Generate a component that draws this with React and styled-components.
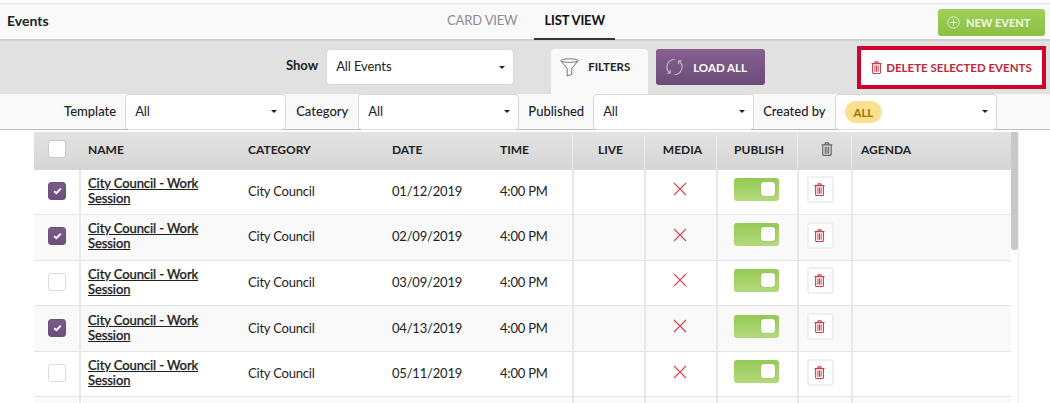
import React from "react";
import styled, { createGlobalStyle } from "styled-components";

const Global = createGlobalStyle`
  html, body { margin: 0; padding: 0; background: #fff; overflow: hidden; }
  body { font-family: Lato, "Open Sans", sans-serif; color: #222; }
  * { box-sizing: border-box; }
`;
const Page = styled.div`width: 1050px; height: 403px; overflow: hidden; padding-top: 3px; background: #fff;`;
const Nav = styled.div`
  height: 38px; display: flex; align-items: stretch; background: #f9f9f9;
  border-top: 1px solid #e4e4e4; border-bottom: 2px solid #cfcfcf; padding: 0 5px 0 7px;
`;
const Title = styled.div`width: 440px; font-size: 14px; font-weight: 700; line-height: 33px; color: #222;`;
const Tab = styled.div`
  height: 36px; line-height: 33px; font-size: 13px; letter-spacing: -.15px; padding: 0 ${p => p.$active ? "10px" : "0"};
  color: ${p => p.$active ? "#111" : "#8c8c8c"}; font-weight: ${p => p.$active ? 700 : 400};
  border-bottom: ${p => p.$active ? "2px solid #333" : "none"};
  margin-right: ${p => p.$active ? "0" : "17px"};
`;
const NewEvent = styled.button`
  margin: 5px 0 0 auto; width: 107px; height: 27px; border: 0; border-radius: 3px;
  background: linear-gradient(#9fd05a, #8cbf45); color: #f2f8e6; font: 700 11px Lato, sans-serif;
  display: flex; align-items: center; justify-content: flex-start; gap: 6px; padding: 0 0 0 9px;
`;
const ShowBar = styled.div`
  height: 53px; background: #e1e1e1; display: flex; align-items: flex-start; padding: 8px 0 0 286px;
`;
const BarLabel = styled.label`font-size: 13px; font-weight: 700; line-height: 33px; margin-right: 8px; color: #222;`;
const Select = styled.div`
  width: ${p => p.$w}px; height: 36px; background: #fff; border: 1px solid #d8d8d8; border-radius: 4px;
  display: flex; align-items: center; justify-content: space-between; padding: 0 8px 2px 9px;
  font-size: 13px; letter-spacing: -.1px; color: #222; flex: none;
  &::after { content: ""; border: 3px solid transparent; border-top: 3.5px solid #222; border-bottom: 0; margin-top: 2px; }
`;
const FilterTab = styled.div`
  margin-left: 37px; width: 97px; height: 45px; background: #f9f9f9; border-radius: 4px 4px 0 0;
  display: flex; align-items: flex-start; padding: 8px 0 0 9px; gap: 9px; font-size: 11.5px; font-weight: 700; color: #222;
  line-height: 20px;
`;
const LoadAll = styled.button`
  margin-left: 8px; width: 109px; height: 36px; border: 0; border-radius: 3px;
  background: linear-gradient(#87608f, #6a4c78); color: #fff; font: 700 11.5px Lato, sans-serif;
  display: flex; align-items: center; padding: 0 0 0 10px; gap: 10px;
`;
const DeleteBtn = styled.button`
  margin: -3px 0 0 92px; width: 189px; height: 43px; border: 4px solid #d0042a; background: #fff;
  color: #b92a42; font: 700 11.5px Lato, sans-serif; display: flex; align-items: center; gap: 4px; padding: 0 0 0 10px;
`;
const FilterRow = styled.div`
  height: 36px; background: #f9f9f9; display: flex; align-items: center; padding-left: 64px;
  border-bottom: 1px solid #bdbdbd;
`;
const FilterLabel = styled.label`
  font-size: 13px; color: #222; flex: none; font-weight: 500;
  margin: 0 ${p => p.$mr ?? 9}px 2px ${p => p.$ml || 0}px;
`;
const Pill = styled.span`
  background: #fbe08f; color: #9c7406; font-size: 11.5px; font-weight: 700; border-radius: 11px;
  height: 22px; line-height: 23px; padding: 0 9px; margin-top: 2px;
`;
const TableArea = styled.div`display: flex; margin: 2px 0 0 34px; width: 985px;`;
const Table = styled.div`width: 977px; flex: none;`;
const cols = "45px 169px 144px 108px 72px 72px 72px 81px 54px 160px";
const Head = styled.div`
  display: grid; grid-template-columns: ${cols}; height: 37.5px;
  background: linear-gradient(#e3e3e3, #d5d5d5); font-size: 12px; font-weight: 700; color: #222;
`;
const HeadCell = styled.div`
  display: flex; align-items: center; justify-content: ${p => p.$center ? "center" : "flex-start"};
  padding-left: ${p => p.$pad ?? 8}px; padding-bottom: 3px;
  box-shadow: ${p => p.$line ? "inset 1px 0 0 #ececec" : "none"};
`;
const Row = styled.div`
  display: grid; grid-template-columns: ${cols}; height: 45.6px; border-bottom: 1.5px solid #e5e5e5;
  background: ${p => p.$alt ? "#f9f9f9" : "#fff"}; font-size: 13px; letter-spacing: -.2px; color: #222;
`;
const Cell = styled.div`
  display: flex; align-items: center; justify-content: ${p => p.$center ? "center" : "flex-start"};
  padding-left: ${p => p.$pad ?? 8}px; padding-bottom: 2px; box-shadow: ${p => p.$line ? "inset 2px 0 0 #e8e8e8" : "none"};
  min-width: 0;
`;
const EventLink = styled.a`
  display: block; max-width: 125px;
  font-size: 13px; line-height: 15px; color: #222; text-decoration: underline;
  letter-spacing: -.1px; font-weight: 500; -webkit-text-stroke: .25px #222;
`;
const Check = styled.span`
  width: 18px; height: 18px; border-radius: 3px; display: flex; align-items: center; justify-content: center; flex: none;
  background: ${p => p.$on ? "linear-gradient(#7c5a88, #6d4f7b)" : "#fff"};
  border: 1px solid ${p => p.$on ? "#6d4f7b" : "#dcdcdc"};
`;
const HeadCheck = styled(Check)`border: 1px solid #c8c8c8;`;
const Switch = styled.div`
  width: 45px; height: 23px; border-radius: 3px; background: linear-gradient(#95c955, #b4da7b); position: relative; margin-top: -3px;
  &::after { content: ""; position: absolute; right: 4px; top: 4px; width: 14px; height: 14px; background: #fff; border-radius: 3px; box-shadow: 0 0 1px #5e8a2a; }
`;
const TrashBtn = styled.button`
  width: 27px; height: 27px; background: #fff; border: 2px solid #f0f0f0; border-radius: 3px; padding: 0 2px 0 0;
  display: flex; align-items: center; justify-content: center; margin-top: -2px;
`;
const ScrollTrack = styled.div`width: 8px; height: 271px; border-right: 1px solid #f0f0f0;`;
const Thumb = styled.div`width: 7px; height: 118px; background: #c8c8c8; border-radius: 0 0 3px 3px;`;

const Trash = ({ c = "#c4414f", s = 13 }) => (
  <svg width={s * 0.85} height={s} viewBox="0 0 11 13" fill="none" style={{ flex: "none" }}>
    <path d="M.5 2.6h10M3.6 2.4 4.2.8h2.6l.6 1.6" stroke={c} strokeWidth="1.2" />
    <path d="M1.6 3v8.4c0 .7.4 1.1 1 1.1h5.8c.6 0 1-.4 1-1.1V3" stroke={c} strokeWidth="1.1" />
    <path d="M3.9 4.4v6.4M5.5 4.4v6.4M7.1 4.4v6.4" stroke={c} strokeWidth="1" />
  </svg>
);
const Tick = () => (
  <svg width="9" height="8" viewBox="0 0 9 8" fill="none"><path d="M1.2 4.2 3.4 6.2 7.8 1.6" stroke="#fff" strokeWidth="2" /></svg>
);
const Cross = () => (
  <svg width="14" height="14" viewBox="0 0 14 14" fill="none" style={{ marginTop: -3 }}><path d="M1 1l12 12M13 1 1 13" stroke="#d9434f" strokeWidth="1.1" /></svg>
);
const Plus = () => (
  <svg width="13" height="13" viewBox="0 0 13 13" fill="none"><circle cx="6.5" cy="6.5" r="5.7" stroke="#dcecc0" /><path d="M6.5 3v7M3 6.5h7" stroke="#dcecc0" /></svg>
);
const Funnel = () => (
  <svg width="19" height="19" viewBox="0 0 19 19" fill="none" style={{ flex: "none", marginTop: 1 }}>
    <ellipse cx="9.5" cy="2.6" rx="8.6" ry="1.8" stroke="#666" strokeWidth=".9" />
    <path d="M1 3l6.2 7.4V18l4.6-1.6v-6L18 3" stroke="#666" strokeWidth=".9" />
  </svg>
);
const Reload = () => (
  <svg width="17" height="18" viewBox="0 0 17 18" fill="none" style={{ flex: "none" }}>
    <path d="M8.5 1.5A7.5 7.5 0 0 0 4 15M8.5 16.5A7.5 7.5 0 0 0 13 3" stroke="#c4b6ca" strokeWidth="1.1" />
    <path d="M4.4 11.8v3.4H1.2M12.6 6.2V2.8h3.2" stroke="#c4b6ca" strokeWidth="1" />
  </svg>
);

const rows = [
  ["01/12/2019", true], ["02/09/2019", true], ["03/09/2019", false],
  ["04/13/2019", true], ["05/11/2019", false], ["", false],
];

export default function App() {
  return (
    <Page>
      <Global />
      <Nav>
        <Title>Events</Title>
        <Tab>CARD VIEW</Tab>
        <Tab $active>LIST VIEW</Tab>
        <NewEvent><Plus />NEW EVENT</NewEvent>
      </Nav>
      <ShowBar>
        <BarLabel>Show</BarLabel>
        <Select $w={188}>All Events</Select>
        <FilterTab><Funnel /><span>FILTERS</span></FilterTab>
        <LoadAll><Reload /><span>LOAD ALL</span></LoadAll>
        <DeleteBtn><Trash c="#c4414f" s={13} />DELETE SELECTED EVENTS</DeleteBtn>
      </ShowBar>
      <FilterRow>
        <FilterLabel>Template</FilterLabel>
        <Select $w={161}>All</Select>
        <FilterLabel $ml={10} $mr={10}>Category</FilterLabel>
        <Select $w={161}>All</Select>
        <FilterLabel $ml={9}>Published</FilterLabel>
        <Select $w={161}>All</Select>
        <FilterLabel $ml={9}>Created by</FilterLabel>
        <Select $w={162}><Pill>ALL</Pill></Select>
      </FilterRow>
      <TableArea>
        <Table>
          <Head>
            <HeadCell $pad={14}><HeadCheck /></HeadCell>
            <HeadCell $pad={9}>NAME</HeadCell>
            <HeadCell $pad={0}>CATEGORY</HeadCell>
            <HeadCell $pad={0}>DATE</HeadCell>
            <HeadCell $pad={0}>TIME</HeadCell>
            <HeadCell $pad={5} $center $line>LIVE</HeadCell>
            <HeadCell $pad={5} $center $line>MEDIA</HeadCell>
            <HeadCell $pad={5} $center $line>PUBLISH</HeadCell>
            <HeadCell $pad={6} $center $line><Trash c="#666" s={14} /></HeadCell>
            <HeadCell $pad={10} $line>AGENDA</HeadCell>
          </Head>
          {rows.map(([date, on], i) => (
            <Row key={i} $alt={i % 2 === 1}>
              <Cell $pad={14}>{date && (<Check $on={on}>{on && <Tick />}</Check>)}</Cell>
              <Cell $pad={9} $line>{date && <EventLink>City Council - Work Session</EventLink>}</Cell>
              <Cell $pad={0}>{date && "City Council"}</Cell>
              <Cell $pad={0}>{date}</Cell>
              <Cell $pad={0}>{date && "4:00 PM"}</Cell>
              <Cell $line />
              <Cell $pad={0} $center $line>{date && <Cross />}</Cell>
              <Cell $pad={0} $center $line>{date && <Switch />}</Cell>
              <Cell $pad={10} $line>{date && <TrashBtn><Trash s={13} /></TrashBtn>}</Cell>
              <Cell $line />
            </Row>
          ))}
        </Table>
        <ScrollTrack><Thumb /></ScrollTrack>
      </TableArea>
    </Page>
  );
}
